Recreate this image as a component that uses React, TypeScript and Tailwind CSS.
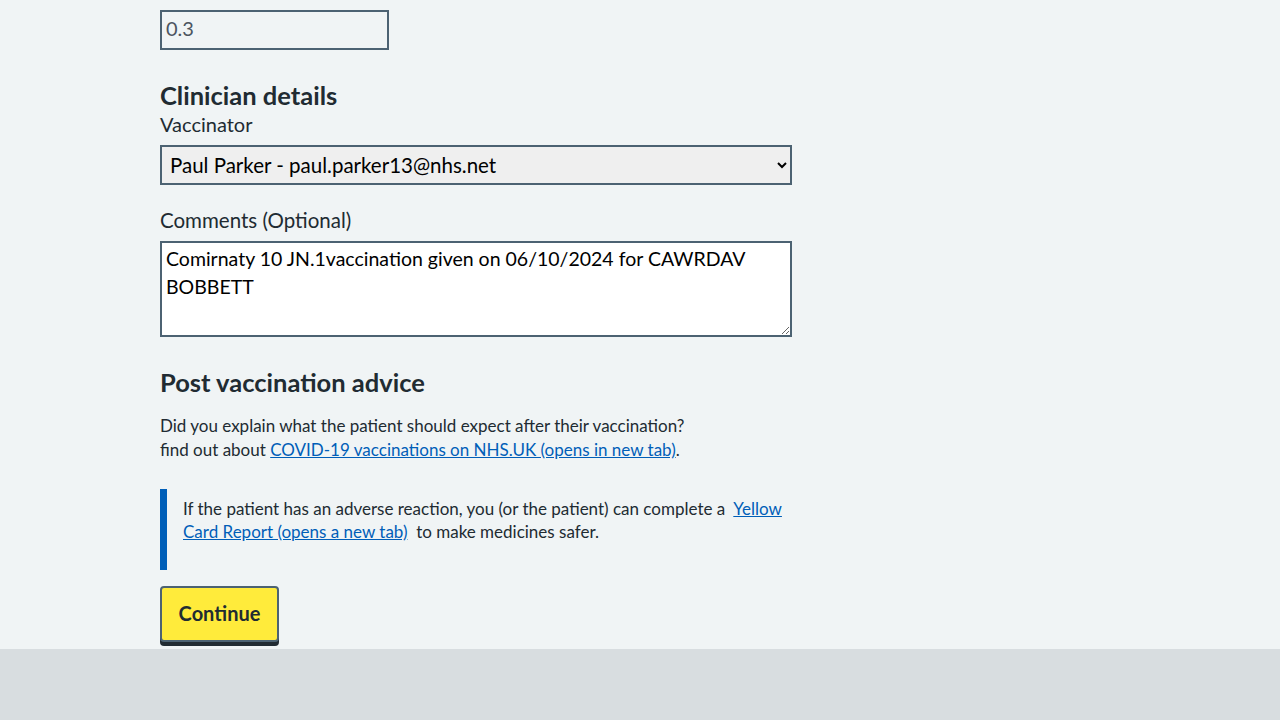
import React from 'react'

export default function App() {
  return (
    <div className="min-h-screen flex flex-col bg-[#f0f4f5] text-[#212b32] font-['Lato',_'Noto_Sans',_sans-serif]">
      <main className="flex-1 pl-[160px] pt-[10px] pb-[6px]">
        <div className="w-[632px]">
          <input
            disabled
            defaultValue="0.3"
            className="block w-[229px] h-[40px] border-2 border-[#4c6272] bg-transparent px-[4px] pb-[4px] text-[20px] text-[#4c5560]"
          />

          <h2 className="mt-[30px] text-[25.5px] leading-[30px] font-bold">Clinician details</h2>
          <label className="block text-[20px] leading-[28px]">Vaccinator</label>
          <select className="mt-[7px] block w-full h-[40px] border-2 border-[#4c6272] bg-[#efefef] px-[4px] text-[20.5px] text-black">
            <option>Paul Parker - paul.parker13@nhs.net</option>
          </select>

          <label className="mt-[21px] block text-[20.5px] leading-[28px]">Comments (Optional)</label>
          <textarea
            defaultValue="Comirnaty 10 JN.1vaccination given on 06/10/2024 for CAWRDAV BOBBETT"
            className="mt-[7px] block w-full h-[96px] border-2 border-[#4c6272] bg-white px-[4px] py-[2px] text-[19.5px] leading-[28px] text-black"
          />

          <h2 className="mt-[29px] text-[25.5px] leading-[32px] font-bold">Post vaccination advice</h2>
          <p className="mt-[16px] text-[17px] leading-[24px]">
            Did you explain what the patient should expect after their vaccination?
            <br />
            find out about{' '}
            <a href="#" className="text-[#005eb8] underline">COVID-19 vaccinations on NHS.UK (opens in new tab)</a>.
          </p>

          <div className="mt-[27px] border-l-[7px] border-[#005eb8] pl-[16px] pt-[8px] pb-[27px]">
            <p className="text-[17px] leading-[23px]">
              If the patient has an adverse reaction, you (or the patient) can complete a{'\u00a0 '}
              <a href="#" className="text-[#005eb8] underline">Yellow Card Report (opens a new tab)</a>
              {'\u00a0 '}to make medicines safer.
            </p>
          </div>

          <button className="mt-[16px] h-[56px] w-[119px] rounded-[4px] border-2 border-[#4c6272] bg-[#ffeb3b] pb-[2px] text-[20px] font-bold text-[#212b32] shadow-[0_4px_0_#212b32]">
            Continue
          </button>
        </div>
      </main>
      <footer className="h-[71px] bg-[#d8dde0]" />
    </div>
  )
}
